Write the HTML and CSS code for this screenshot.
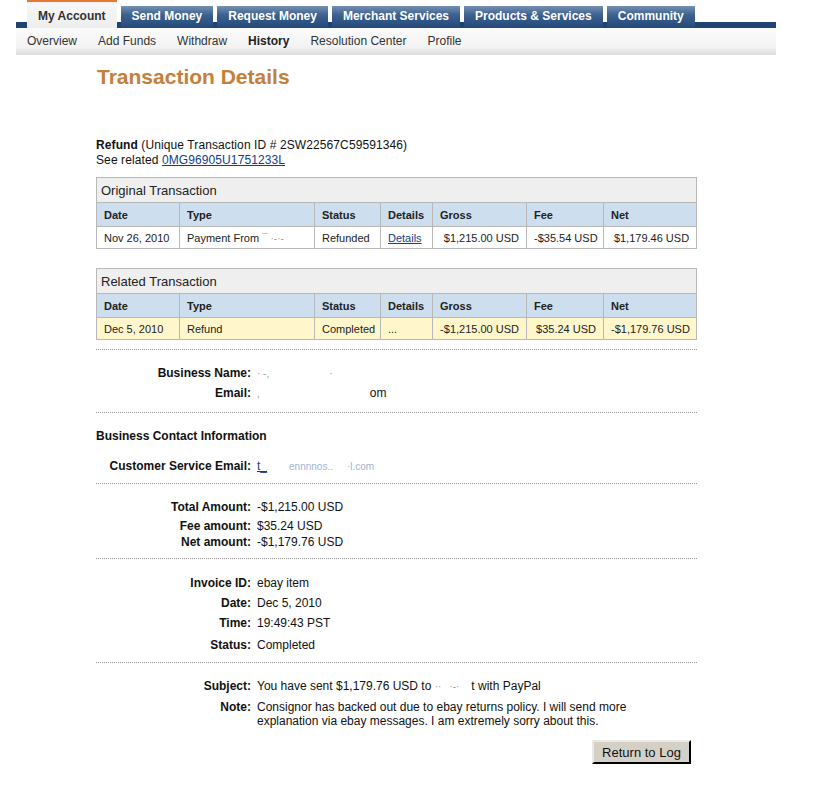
FILE: index.html
```html
<!DOCTYPE html>
<html lang="en">
<head>
  <meta charset="UTF-8" />
  <title>Transaction Details</title>
  <link rel="stylesheet" href="styles.css">
</head>
<body>
  <div class="page">
    <div class="tabs">
      <a class="tab active" href="#">My Account</a>
      <a class="tab" href="#">Send Money</a>
      <a class="tab" href="#">Request Money</a>
      <a class="tab" href="#">Merchant Services</a>
      <a class="tab" href="#">Products &amp; Services</a>
      <a class="tab" href="#">Community</a>
    </div>
    <div class="subnav">
      <a href="#">Overview</a>
      <a href="#">Add Funds</a>
      <a href="#">Withdraw</a>
      <a class="current" href="#">History</a>
      <a href="#">Resolution Center</a>
      <a href="#">Profile</a>
    </div>

    <div class="content">
      <h1 class="page-title">Transaction Details</h1>

      <p class="summary"><b>Refund</b> (Unique Transaction ID # 2SW22567C59591346)<br>
        See related <a href="#">0MG96905U1751233L</a></p>

      <table class="txn">
        <colgroup>
          <col class="c-date"><col class="c-type"><col class="c-status"><col class="c-details">
          <col class="c-gross"><col class="c-fee"><col class="c-net">
        </colgroup>
        <tr class="title-row"><th colspan="7">Original Transaction</th></tr>
        <tr class="head-row">
          <th>Date</th><th>Type</th><th>Status</th><th>Details</th><th>Gross</th><th>Fee</th><th>Net</th>
        </tr>
        <tr>
          <td>Nov 26, 2010</td>
          <td>Payment From <span class="redact">&#175; &middot;-&middot;-</span></td>
          <td>Refunded</td>
          <td><a href="#">Details</a></td>
          <td class="num">$1,215.00 USD</td>
          <td class="num">-$35.54 USD</td>
          <td class="num">$1,179.46 USD</td>
        </tr>
      </table>

      <table class="txn related">
        <colgroup>
          <col class="c-date"><col class="c-type"><col class="c-status"><col class="c-details">
          <col class="c-gross"><col class="c-fee"><col class="c-net">
        </colgroup>
        <tr class="title-row"><th colspan="7">Related Transaction</th></tr>
        <tr class="head-row">
          <th>Date</th><th>Type</th><th>Status</th><th>Details</th><th>Gross</th><th>Fee</th><th>Net</th>
        </tr>
        <tr class="hilite">
          <td>Dec 5, 2010</td>
          <td>Refund</td>
          <td>Completed</td>
          <td>...</td>
          <td class="num">-$1,215.00 USD</td>
          <td class="num">$35.24 USD</td>
          <td class="num">-$1,179.76 USD</td>
        </tr>
      </table>

      <div class="info sec-business">
        <div class="row"><span class="label">Business Name:</span><span><span class="redact">&middot; -,</span><span class="gap w60"></span><span class="redact">&middot;</span></span></div>
        <div class="row tight"><span class="label">Email:</span><span><span class="redact">,</span><span class="gap w110"></span>om</span></div>
      </div>

      <div class="info sec-contact">
        <div class="section-head">Business Contact Information</div>
        <div class="row gap-lg"><span class="label">Customer Service Email:</span><span><a href="#">t_</a><span class="gap w22"></span><span class="redact blue">&#1077;nnnnos..</span><span class="gap w14"></span><span class="redact blue">&middot;l.com</span></span></div>
      </div>

      <div class="info sec-amounts">
        <div class="row"><span class="label">Total Amount:</span><span>-$1,215.00 USD</span></div>
        <div class="row tight"><span class="label">Fee amount:</span><span>$35.24 USD</span></div>
        <div class="row tighter"><span class="label">Net amount:</span><span>-$1,179.76 USD</span></div>
      </div>

      <div class="info sec-invoice">
        <div class="row"><span class="label">Invoice ID:</span><span>ebay item</span></div>
        <div class="row"><span class="label">Date:</span><span>Dec 5, 2010</span></div>
        <div class="row"><span class="label">Time:</span><span>19:49:43 PST</span></div>
        <div class="row loose"><span class="label">Status:</span><span>Completed</span></div>
      </div>

      <div class="info sec-message">
        <div class="row"><span class="label">Subject:</span><span>You have sent $1,179.76 USD to <span class="redact">&middot;&middot;</span><span class="gap w8"></span><span class="redact">&middot;-&middot;</span><span class="gap w12"></span>t with PayPal</span></div>
        <div class="row"><span class="label">Note:</span><span class="note">Consignor has backed out due to ebay returns policy. I will send more explanation via ebay messages. I am extremely sorry about this.</span></div>
        <div class="actions"><button class="btn">Return to Log</button></div>
      </div>
    </div>
  </div>
</body>
</html>
```

FILE: styles.css
```css
body {
  margin: 0;
  font-family: "Liberation Sans", Arial, sans-serif;
  font-size: 12px;
  color: #111;
  background: #fff;
}

a {
  color: #10408a;
}

.page {
  width: 760px;
  margin-left: 16px;
}

/* top tabs sit on a navy strip */
.tabs {
  display: flex;
  align-items: flex-end;
  gap: 4px;
  height: 28px;
  padding-left: 11px;
  background: linear-gradient(to bottom, transparent 22px, #1f4473 22px);
}
.tab {
  height: 22px;
  line-height: 21px;
  padding: 0 11px;
  color: #fff;
  font-weight: bold;
  text-decoration: none;
  background: linear-gradient(to bottom, #7590b2 0%, #3d6290 40%, #23497a 100%);
}
.tab.active {
  height: 26px;
  line-height: 29px;
  color: #333;
  border-top: 2px solid #e8762f;
  background: linear-gradient(to bottom, #f7f7f7, #eeeeee);
}

.subnav {
  display: flex;
  gap: 21px;
  height: 27px;
  padding-left: 11px;
  line-height: 26px;
  background: linear-gradient(to bottom, #fbfbfb 0%, #f3f3f3 70%, #dcdcdc 100%);
}
.subnav a {
  color: #333;
  text-decoration: none;
}
.subnav a.current {
  font-weight: bold;
  color: #222;
}

.content {
  padding-left: 80px;
  width: 601px;
}

.page-title {
  margin: 10px 0 0 1px;
  font-size: 21px;
  line-height: 24px;
  color: #c4803b;
}

.summary {
  margin: 49px 0 9px;
  line-height: 15px;
  letter-spacing: 0.1px;
}

/* transaction tables */
.txn {
  width: 601px;
  border-collapse: collapse;
  table-layout: fixed;
  font-size: 11px;
  border: 1px solid #adadad;
}
.txn.related {
  margin-top: 19px;
}
.c-date { width: 83px; }
.c-type { width: 135px; }
.c-status { width: 66px; }
.c-details { width: 52px; }
.c-gross { width: 94px; }
.c-fee { width: 77px; }
.c-net { width: 93px; }

.txn th,
.txn td {
  border: 1px solid #b8b8b8;
  padding: 0 7px;
  text-align: left;
  white-space: nowrap;
  overflow: hidden;
}
.txn .title-row th {
  height: 24px;
  padding-left: 4px;
  font-size: 13px;
  font-weight: normal;
  background: #efefef;
  color: #222;
}
.txn .head-row th {
  height: 23px;
  background: #cddeee;
  color: #222;
}
.txn td {
  height: 21px;
  color: #222;
}
.txn td.num {
  text-align: right;
}
.txn .hilite td {
  background: #fff7cb;
}

/* label / value blocks */
.info {
  border-top: 1px dotted #9a9a9a;
  line-height: 14px;
}
.row {
  display: grid;
  grid-template-columns: 155px 1fr;
  column-gap: 6px;
  margin-top: 6px;
}
.row .label {
  text-align: right;
  font-weight: bold;
}
.row.tight { margin-top: 5px; }
.row.tighter { margin-top: 2px; }
.row.loose { margin-top: 8px; }
.row.gap-lg { margin-top: 16px; }

.section-head {
  font-weight: bold;
}

.sec-business { margin-top: 9px; padding: 10px 0 11px; }
.sec-contact { padding: 16px 0 9px; }
.sec-amounts { padding: 10px 0 9px; }
.sec-invoice { padding: 11px 0 10px; }
.sec-message { padding: 10px 0 20px; }

.note {
  padding-right: 40px;
}

.redact {
  color: #9a9a9a;
  font-size: 10px;
}
.redact.blue {
  color: #9fb3d6;
}
.gap {
  display: inline-block;
}
.w8 { width: 8px; }
.w12 { width: 12px; }
.w14 { width: 14px; }
.w22 { width: 22px; }
.w60 { width: 60px; }
.w110 { width: 110px; }

.actions {
  display: flex;
  justify-content: flex-end;
  padding-right: 6px;
  margin-top: 12px;
}
.btn {
  width: 99px;
  height: 24px;
  padding: 0;
  font-family: "Liberation Sans", Arial, sans-serif;
  font-size: 13px;
  color: #111;
  background: #d4d0c8;
  border: 2px outset #ece9e2;
  border-right-color: #404040;
  border-bottom-color: #404040;
}
```
